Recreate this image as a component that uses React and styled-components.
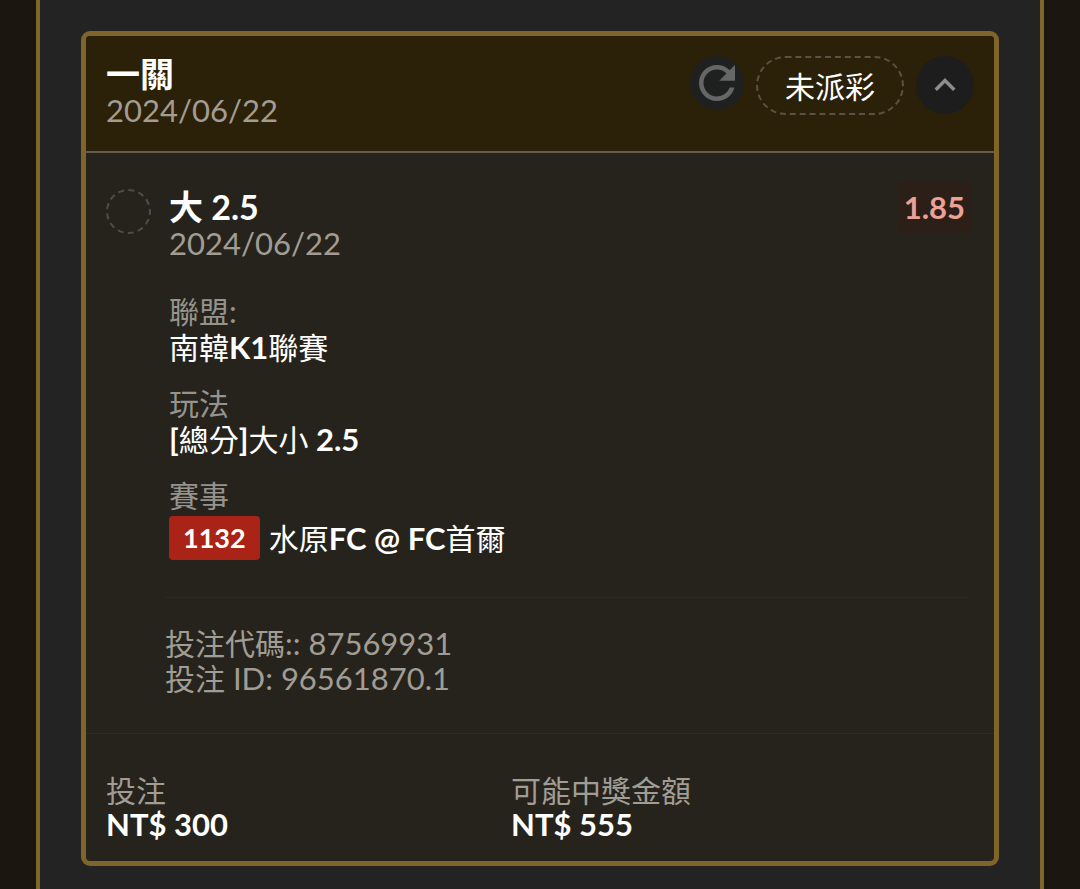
import React, { useState } from "react";
import styled, { createGlobalStyle } from "styled-components";
import { MdKeyboardArrowUp, MdKeyboardArrowDown, MdRefresh } from "react-icons/md";

const GlobalStyle = createGlobalStyle`
  * {
    box-sizing: border-box;
  }
  body {
    margin: 0;
    background: #1b1710;
    color: #fff;
    font-family: Lato, "Noto Sans CJK TC", sans-serif;
  }
`;

const Panel = styled.main`
  min-height: 100vh;
  margin: 0 36px;
  padding: 31px 41px 23px;
  border: solid #80652a;
  border-width: 0 4px;
  background: #232323;
`;

const Card = styled.article`
  border: 5px solid #80652a;
  border-radius: 9px;
  background: #26231d;
  overflow: hidden;
`;

const Header = styled.header`
  display: flex;
  justify-content: space-between;
  align-items: flex-start;
  padding: 20px 20px 23px;
  border-bottom: 2px solid #665d4f;
  background: #2b2108;
`;

const Title = styled.h2`
  margin: 0;
  font-size: 34px;
  line-height: 36px;
  font-weight: 700;
`;

const Muted = styled.div`
  font-size: 31px;
  line-height: ${(props) => props.$line || 36}px;
  color: #a19d95;
`;

// Chinese text runs lighter and a touch smaller than the Latin around it
const Zh = styled.span`
  font-size: 30px;
  line-height: 1;
  font-weight: 400;
`;

const Actions = styled.div`
  display: flex;
  align-items: flex-start;
  gap: 12px;
`;

const RoundButton = styled.button`
  display: flex;
  align-items: center;
  justify-content: center;
  width: ${(props) => props.$size}px;
  height: ${(props) => props.$size}px;
  padding: 0;
  border: none;
  border-radius: 50%;
  background: ${(props) => props.$bg};
  color: ${(props) => props.$color};
  cursor: pointer;
`;

const Status = styled.span`
  display: flex;
  align-items: center;
  height: 59px;
  padding: 0 27px;
  border: 2px dashed #5c5142;
  border-radius: 30px;
`;

const Leg = styled.section`
  display: flex;
  align-items: flex-start;
  gap: 18px;
  padding: 36px 23px 37px 20px;
`;

const Dot = styled.span`
  flex: none;
  width: 45px;
  height: 45px;
  border: 2px dashed #504c46;
  border-radius: 50%;
`;

const LegInfo = styled.div`
  flex: 1;
`;

const Details = styled.dl`
  display: grid;
  gap: 20px;
  margin: 32px 0 0;
`;

const Term = styled.dt`
  font-size: 31px;
  line-height: 36px;
  color: #96938d;
`;

const Value = styled.dd`
  margin: 0;
  font-size: 31px;
  line-height: 36px;
  font-weight: 700;
`;

const Match = styled(Value)`
  display: flex;
  align-items: center;
  gap: 9px;
  padding-top: 3px;
`;

const GameNumber = styled.span`
  padding: 0 14px;
  border-radius: 4px;
  background: #aa2317;
  font-size: 27px;
  line-height: 44px;
`;

const Odds = styled.strong`
  padding: 8px 6px;
  border-radius: 4px;
  background: #2b1f18;
  color: #eca196;
  font-size: 31px;
  line-height: 36px;
  margin-top: -8px;
`;

const References = styled.section`
  margin: 0 26px 0 79px;
  padding: 28px 0 37px;
  border-top: 1px solid #2c2924;
`;

const Totals = styled.footer`
  display: grid;
  grid-template-columns: 7fr 8fr;
  padding: 39px 20px 20px;
  border-top: 1px solid #2f2c26;
`;

const Amount = styled.div`
  font-size: 31px;
  line-height: 34px;
  font-weight: 700;
`;

function App() {
  const [open, setOpen] = useState(true);

  return (
    <>
      <GlobalStyle />
      <Panel lang="zh-TW">
        <Card>
          <Header>
            <div>
              <Title>一關</Title>
              <Muted>2024/06/22</Muted>
            </div>
            <Actions>
              <RoundButton $size={54} $bg="#1f2020" $color="#666666" aria-label="重新整理">
                <MdRefresh size={54} />
              </RoundButton>
              <Status>
                <Zh>未派彩</Zh>
              </Status>
              <RoundButton
                $size={58}
                $bg="#1e1d1e"
                $color="#8e8d8c"
                aria-label="展開"
                aria-expanded={open}
                onClick={() => setOpen(!open)}
              >
                {open ? <MdKeyboardArrowUp size={42} /> : <MdKeyboardArrowDown size={42} />}
              </RoundButton>
            </Actions>
          </Header>
          {open && (
            <>
              <Leg>
                <Dot />
                <LegInfo>
                  <Title>大 2.5</Title>
                  <Muted>2024/06/22</Muted>
                  <Details>
                    <div>
                      <Term>
                        <Zh>聯盟</Zh>:
                      </Term>
                      <Value>
                        <Zh>南韓</Zh>K1<Zh>聯賽</Zh>
                      </Value>
                    </div>
                    <div>
                      <Term>
                        <Zh>玩法</Zh>
                      </Term>
                      <Value>
                        [<Zh>總分</Zh>]<Zh>大小</Zh> 2.5
                      </Value>
                    </div>
                    <div>
                      <Term>
                        <Zh>賽事</Zh>
                      </Term>
                      <Match>
                        <GameNumber>1132</GameNumber>
                        <span>
                          <Zh>水原</Zh>FC @ FC<Zh>首爾</Zh>
                        </span>
                      </Match>
                    </div>
                  </Details>
                </LegInfo>
                <Odds>1.85</Odds>
              </Leg>
              <References>
                <Muted $line={35}>
                  <Zh>投注代碼</Zh>:: 87569931
                </Muted>
                <Muted $line={35}>
                  <Zh>投注</Zh> ID: 96561870.1
                </Muted>
              </References>
            </>
          )}
          <Totals>
            <div>
              <Muted $line={34}>
                <Zh>投注</Zh>
              </Muted>
              <Amount>NT$ 300</Amount>
            </div>
            <div>
              <Muted $line={34}>
                <Zh>可能中獎金額</Zh>
              </Muted>
              <Amount>NT$ 555</Amount>
            </div>
          </Totals>
        </Card>
      </Panel>
    </>
  );
}

export default App;
